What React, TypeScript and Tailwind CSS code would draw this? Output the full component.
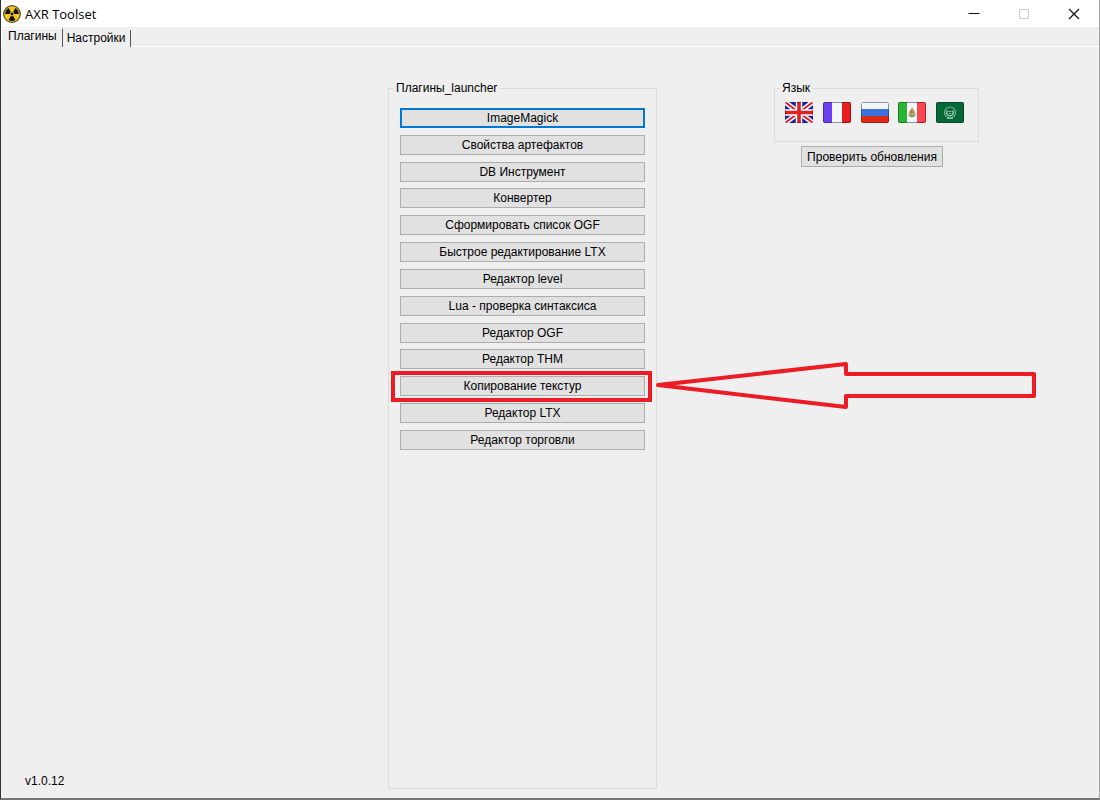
import { useState } from "react";
import type { ReactNode } from "react";
import clsx from "clsx";

type Plugin = {
  name: string;
  marked?: boolean;
};

type Language = {
  code: string;
  label: string;
  flag: ReactNode;
};

const plugins: Plugin[] = [
  { name: "ImageMagick" },
  { name: "Свойства артефактов" },
  { name: "DB Инструмент" },
  { name: "Конвертер" },
  { name: "Сформировать список OGF" },
  { name: "Быстрое редактирование LTX" },
  { name: "Редактор level" },
  { name: "Lua - проверка синтаксиса" },
  { name: "Редактор OGF" },
  { name: "Редактор THM" },
  { name: "Копирование текстур", marked: true },
  { name: "Редактор LTX" },
  { name: "Редактор торговли" },
];

const languages: Language[] = [
  {
    code: "en",
    label: "English",
    flag: (
      <>
        <rect width="28" height="21" fill="#1c1f9c" />
        <path d="M0 0 28 21M28 0 0 21" stroke="#fff" strokeWidth="5" />
        <path d="M0 0 28 21M28 0 0 21" stroke="#dc2430" strokeWidth="2" />
        <path d="M14 0V21M0 10.5H28" stroke="#fff" strokeWidth="6.5" />
        <path d="M14 0V21M0 10.5H28" stroke="#e02020" strokeWidth="3.6" />
        <path d="M.5 8.5v4M27.5 8.5v4M12 .5h4M12 20.5h4" stroke="#a01015" />
      </>
    ),
  },
  {
    code: "fr",
    label: "Français",
    flag: (
      <>
        <rect width="28" height="21" fill="#f4f7fa" />
        <rect width="9" height="21" fill="#6a40f0" />
        <rect x="19" width="9" height="21" fill="#e62020" />
        <path d="M9 20.5H1.5q-1 0-1-1v-18q0-1 1-1H9" fill="none" stroke="#46309c" />
        <path d="M9 .5h10M9 20.5h10" stroke="#8795a5" />
        <path d="M19 .5h7.5q1 0 1 1v18q0 1-1 1H19" fill="none" stroke="#a01218" />
      </>
    ),
  },
  {
    code: "ru",
    label: "Русский",
    flag: (
      <>
        <rect width="28" height="21" fill="#f4f7fa" />
        <rect y="7" width="28" height="7" fill="#3a72e0" />
        <rect y="14" width="28" height="7" fill="#e02a18" />
        <path d="M.5 7V1.5q0-1 1-1h25q1 0 1 1V7" fill="none" stroke="#8795a5" />
        <path d="M.5 7v7M27.5 7v7" stroke="#2450a8" />
        <path d="M.5 14v5.5q0 1 1 1h25q1 0 1-1V14" fill="none" stroke="#a51c14" />
      </>
    ),
  },
  {
    code: "es",
    label: "Español",
    flag: (
      <>
        <rect width="28" height="21" fill="#f4f7fa" />
        <rect width="9" height="21" fill="#2cb432" />
        <rect x="19" width="9" height="21" fill="#fa4650" />
        <path d="M14 5l1.5 2 1 2 1 3-1.5 3h-4L10.5 12l1-3 1.5-2z" fill="#c8a468" />
        <path d="M11 13q3 3.5 6 0" fill="none" stroke="#63a497" strokeWidth="1.5" />
        <path d="M12 10h4M13 8v4" stroke="#a5783c" />
        <path d="M9 20.5H1.5q-1 0-1-1v-18q0-1 1-1H9" fill="none" stroke="#187c20" />
        <path d="M9 .5h10M9 20.5h10" stroke="#8795a5" />
        <path d="M19 .5h7.5q1 0 1 1v18q0 1-1 1H19" fill="none" stroke="#b02028" />
      </>
    ),
  },
  {
    code: "ar",
    label: "العربية",
    flag: (
      <>
        <rect width="28" height="21" fill="#066837" />
        <rect x=".5" y=".5" width="27" height="20" rx="1" fill="none" stroke="#044a28" />
        <circle cx="14" cy="10.5" r="5.5" fill="none" stroke="#7fb598" strokeWidth="1.2" />
        <path d="M16.5 8.5a3.200 3.200 0 1 1-5 0" fill="none" stroke="#a9cdb9" strokeWidth="1.2" />
        <path d="M12.500 9.500h3M13 11.500h2M11 16.5h6" stroke="#8dbda3" />
      </>
    ),
  },
];

function RadiationIcon() {
  return (
    <svg viewBox="0 0 18 18" className="size-[18px]" aria-hidden="true">
      <circle cx="9" cy="9" r="8.3" fill="#f4c51c" stroke="#5c5230" strokeWidth="1.3" />
      <g fill="#14120c">
        <circle cx="9" cy="9" r="1.4" />
        <path d="M6.7 9H2.2A6.8 6.8 0 0 1 5.6 3.1L7.85 7A2.3 2.3 0 0 0 6.7 9z" />
        <path d="M11.3 9h4.5a6.8 6.8 0 0 0-3.4-5.9L10.15 7A2.3 2.3 0 0 1 11.3 9z" />
        <path d="M7.85 11 5.6 14.9a6.8 6.8 0 0 0 6.8 0L10.15 11a2.3 2.3 0 0 1-2.3 0z" />
      </g>
    </svg>
  );
}

function TitleBar() {
  return (
    <header className="flex h-[27px] items-center bg-white pl-[2px]">
      <RadiationIcon />
      <h1 className="ml-1 flex-1 font-['Open_Sans','Noto_Sans',sans-serif] text-[13px] leading-4">
        AXR Toolset
      </h1>
      <button aria-label="Свернуть" className="grid h-full w-[50px] place-items-center">
        <svg viewBox="0 0 12 12" className="size-3" stroke="#111">
          <path d="M.5 5.5h11" />
        </svg>
      </button>
      <button aria-label="Развернуть" disabled className="grid h-full w-[50px] place-items-center">
        <svg viewBox="0 0 12 12" className="size-3" fill="none" stroke="#ccc">
          <path d="M1.5 1.5h9v9h-9z" />
        </svg>
      </button>
      <button aria-label="Закрыть" className="grid h-full w-[50px] place-items-center">
        <svg viewBox="0 0 12 12" className="size-3" stroke="#111" strokeWidth="1.2">
          <path d="M1 1l10 10M11 1 1 11" />
        </svg>
      </button>
    </header>
  );
}

// Red frame and arrow laid over the highlighted plugin
function Marker() {
  return (
    <>
      <span className="pointer-events-none absolute -top-[5px] -right-[7px] -bottom-[6px] -left-[9px] border-4 border-[#ed1c24]" />
      <svg
        viewBox="0 0 384 52"
        className="pointer-events-none absolute -top-4 left-[255px] h-[52px] w-[384px] max-w-none"
        fill="none"
        stroke="#ed1c24"
        strokeWidth="4"
        strokeLinejoin="round"
        aria-hidden="true"
      >
        <path d="M3 25 191 4V14H379V36H191V47z" />
      </svg>
    </>
  );
}

export default function App() {
  const [tab, setTab] = useState("plugins");

  return (
    <div className="flex min-h-screen flex-col border-r border-b-2 border-l border-r-[#a5a5a5] border-b-[#777] border-l-[#333] bg-[#efefef] font-['Liberation_Sans',Arial,sans-serif] text-[12px] leading-4 text-black">
      <TitleBar />

      <nav role="tablist" className="flex h-5 items-end">
        <button
          role="tab"
          aria-selected={tab === "plugins"}
          onClick={() => setTab("plugins")}
          className="h-[19px] border-t border-r border-l border-t-white border-r-[#555] border-l-white pr-[5px] pb-[3px] pl-[6px] leading-[15px]"
        >
          Плагины
        </button>
        <button
          role="tab"
          aria-selected={tab === "settings"}
          onClick={() => setTab("settings")}
          className="h-[17px] border-r border-r-[#555] pr-[5px] pl-1 leading-[17px]"
        >
          Настройки
        </button>
        <span className="flex-1 border-b border-white" />
      </nav>

      <main className="grid flex-1 grid-cols-[387fr_269px_442fr] pt-[33px] pb-[9px]">
        <p className="self-end pl-6">v1.0.12</p>

        <fieldset className="border border-[#dcdcdc] px-[11px]">
          <legend className="-ml-[6px] px-[2px]">Плагины_launcher</legend>
          <ul className="mt-3 flex h-[342px] flex-col justify-between">
            {plugins.map((plugin, i) => (
              <li key={plugin.name} className="relative h-5">
                <button
                  className={clsx(
                    "flex h-full w-full items-center justify-center bg-[#e1e1e1]",
                    i === 0 ? "border-2 border-[#0078d7]" : "border border-[#adadad]"
                  )}
                >
                  {plugin.name}
                </button>
                {plugin.marked && <Marker />}
              </li>
            ))}
          </ul>
        </fieldset>

        <aside className="ml-[117px] w-[205px]">
          <fieldset className="h-[62px] border border-[#dcdcdc] px-[10px]">
            <legend className="-ml-[5px] px-[2px]">Язык</legend>
            <div className="mt-[6px] flex w-[179px] justify-between">
              {languages.map((lang) => (
                <button key={lang.code} aria-label={lang.label} className="overflow-hidden rounded-[2px]">
                  <svg viewBox="0 0 28 21" className="h-[21px] w-7">
                    {lang.flag}
                  </svg>
                </button>
              ))}
            </div>
          </fieldset>
          <button className="mt-1 ml-[27px] flex h-[21px] w-[142px] items-center justify-center border border-[#adadad] bg-[#e1e1e1] whitespace-nowrap">
            Проверить обновления
          </button>
        </aside>
      </main>
    </div>
  );
}
